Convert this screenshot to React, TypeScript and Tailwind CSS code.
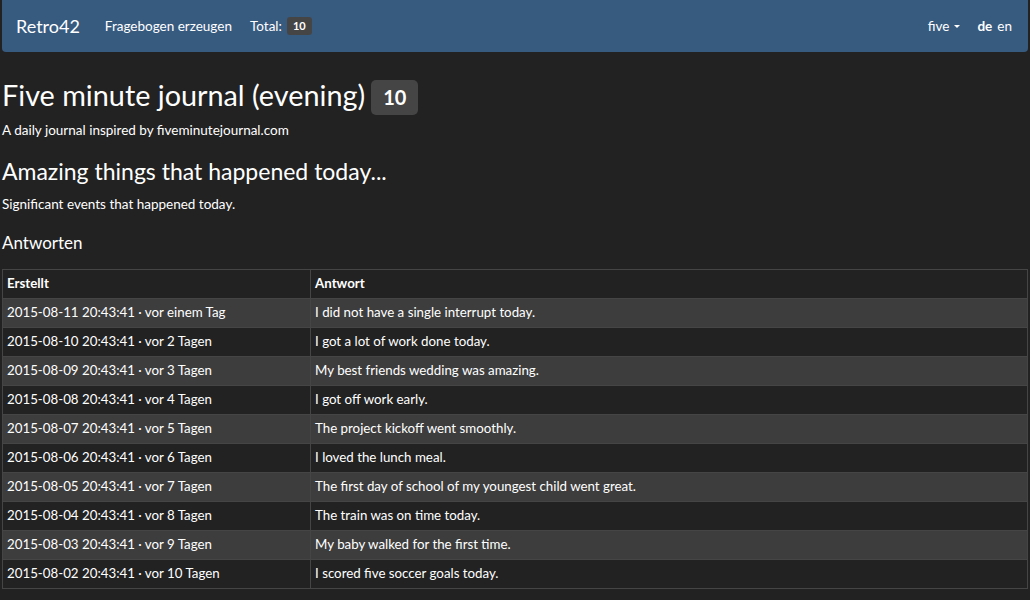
const rows = [
  ["2015-08-11 20:43:41 · vor einem Tag", "I did not have a single interrupt today."],
  ["2015-08-10 20:43:41 · vor 2 Tagen", "I got a lot of work done today."],
  ["2015-08-09 20:43:41 · vor 3 Tagen", "My best friends wedding was amazing."],
  ["2015-08-08 20:43:41 · vor 4 Tagen", "I got off work early."],
  ["2015-08-07 20:43:41 · vor 5 Tagen", "The project kickoff went smoothly."],
  ["2015-08-06 20:43:41 · vor 6 Tagen", "I loved the lunch meal."],
  ["2015-08-05 20:43:41 · vor 7 Tagen", "The first day of school of my youngest child went great."],
  ["2015-08-04 20:43:41 · vor 8 Tagen", "The train was on time today."],
  ["2015-08-03 20:43:41 · vor 9 Tagen", "My baby walked for the first time."],
  ["2015-08-02 20:43:41 · vor 10 Tagen", "I scored five soccer goals today."],
];

export default function App() {
  return (
    <div className="min-h-[600px] bg-[#222222] px-[2px] text-[13.5px] text-white" style={{ fontFamily: "Lato, 'Open Sans', sans-serif" }}>
      <nav className="flex h-[52px] items-center justify-between rounded-b-[4px] bg-[#375a7f] pl-[14px] pr-[16px]">
        <div className="flex items-center">
          <span className="text-[18px]">Retro42</span>
          <span className="ml-[25px]">Fragebogen erzeugen</span>
          <span className="ml-[18px] flex items-center">
            Total:
            <span className="ml-[5px] rounded-[3px] bg-[#464545] px-[6px] py-[4px] text-[11px] font-bold leading-[10px]">10</span>
          </span>
        </div>
        <div className="flex items-center">
          <span className="flex items-center">
            five
            <span className="ml-[5px] mt-[1px] h-0 w-0 border-x-[3px] border-t-[3px] border-x-transparent border-t-white" />
          </span>
          <span className="ml-[17px] font-bold">de</span>
          <span className="ml-[5px]">en</span>
        </div>
      </nav>

      <h1 className="mt-[25px] flex h-[36px] items-center text-[28.8px] leading-[36px]">
        Five minute journal (evening)
        <span className="ml-[6px] mt-[5px] rounded-[5px] bg-[#464545] px-[12px] py-[6px] text-[20px] font-bold leading-[23px]">10</span>
      </h1>
      <p className="mt-[8px] leading-[18px]">A daily journal inspired by fiveminutejournal.com</p>

      <h2 className="mt-[17px] text-[23px] leading-[30px]">Amazing things that happened today...</h2>
      <p className="mt-[9px] leading-[18px]">Significant events that happened today.</p>

      <h3 className="mt-[20px] text-[17px] leading-[20px]">Antworten</h3>

      <table className="mt-[16px] w-full border-collapse border border-[#464545] text-[13.3px]">
        <thead>
          <tr>
            <th className="h-[29px] w-[308px] border border-[#464545] px-[4px] text-left font-bold">Erstellt</th>
            <th className="h-[29px] border border-[#464545] px-[4px] text-left font-bold">Antwort</th>
          </tr>
        </thead>
        <tbody>
          {rows.map(([date, answer], i) => (
            <tr key={i} className={i % 2 === 0 ? "bg-[#3d3d3d]" : "bg-[#222222]"}>
              <td className="h-[29px] border border-[#464545] px-[4px]">{date}</td>
              <td className="h-[29px] border border-[#464545] px-[4px]">{answer}</td>
            </tr>
          ))}
        </tbody>
      </table>
    </div>
  );
}
